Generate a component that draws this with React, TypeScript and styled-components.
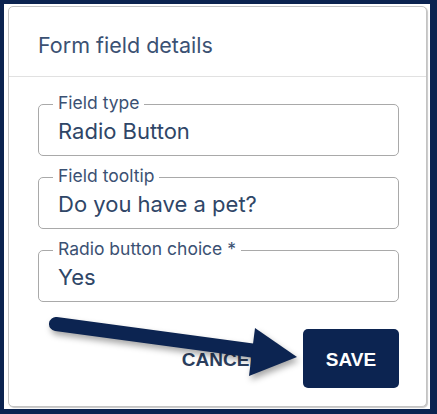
import React from 'react';
import styled, { createGlobalStyle } from 'styled-components';

const GlobalStyle = createGlobalStyle`
    html, body {
        margin: 0;
        padding: 0;
        background: #0b2350;
    }
    * {
        box-sizing: border-box;
    }
`;

const Frame = styled.div`
    position: relative;
    width: 437px;
    height: 414px;
    padding: 4px 7px 5px 4px;
    background: #0b2350;
`;

const Sheet = styled.div`
    height: 100%;
    background: #ffffff;
    padding: 2px 3px 2px 4px;
`;

const Card = styled.div`
    height: 100%;
    display: flex;
    flex-direction: column;
    border: 1px solid #c4c4c4;
    border-radius: 5px;
    box-shadow: 1px 1px 1px rgba(0, 0, 0, 0.22);
    background: #ffffff;
`;

const Header = styled.div`
    height: 70px;
    display: flex;
    align-items: center;
    padding: 6px 0 0 29px;
    border-bottom: 1px solid #e1e1e1;
    font-family: Inter, "Liberation Sans", sans-serif;
    font-size: 21.5px;
    color: #3b5173;
`;

const Body = styled.div`
    display: flex;
    flex-direction: column;
    gap: 21px;
    padding: 27px 27px 0 29px;
`;

const Field = styled.div`
    position: relative;
    height: 52px;
    display: flex;
    align-items: center;
    padding: 1px 19px 0;
    border: 1px solid #a9a9a9;
    border-radius: 5px;
`;

const FieldLabel = styled.span`
    position: absolute;
    top: -13px;
    left: 14px;
    padding: 0 5px;
    background: #ffffff;
    font-family: Inter, "Liberation Sans", sans-serif;
    font-size: 17.5px;
    line-height: 22px;
    color: #3b5173;
`;

const FieldValue = styled.span`
    font-family: Inter, "Liberation Sans", sans-serif;
    font-size: 22px;
    color: #2f4667;
`;

const Actions = styled.div`
    display: flex;
    justify-content: flex-end;
    align-items: center;
    gap: 24px;
    padding: 27px 27px 0 0;
`;

interface ActionProps {
    $primary?: boolean
}

const ActionButton = styled.button<ActionProps>`
    height: 59px;
    min-width: ${props => props.$primary ? '96px' : 'auto'};
    padding: ${props => props.$primary ? '2px 0 0' : '2px 18px 0'};
    border: none;
    border-radius: 5px;
    background: ${props => props.$primary ? '#0c2451' : 'transparent'};
    color: ${props => props.$primary ? '#ffffff' : '#2b3e5d'};
    font-family: "Liberation Sans", Arial, sans-serif;
    font-weight: 700;
    font-size: 19px;
    cursor: pointer;
`;

const Pointer = styled.svg`
    position: absolute;
    left: 0;
    top: 0;
    pointer-events: none;
    filter: drop-shadow(2px 4px 3px rgba(0, 0, 0, 0.35));
`;

const fields = [
    { label: 'Field type', value: 'Radio Button' },
    { label: 'Field tooltip', value: 'Do you have a pet?' },
    { label: 'Radio button choice *', value: 'Yes' },
];

function Arrow() {
    return (
        <Pointer width="437" height="414" viewBox="0 0 437 414">
            <line x1="56" y1="324" x2="256" y2="351" stroke="#0c2451" strokeWidth="14" strokeLinecap="round" />
            <polygon points="255,328 297,357 249,376" fill="#0c2451" />
        </Pointer>
    )
}

export default function App() {
    return (
        <Frame>
            <GlobalStyle />
            <Sheet>
                <Card>
                    <Header>Form field details</Header>
                    <Body>
                        {fields.map((field) => (
                            <Field key={field.label}>
                                <FieldLabel>{field.label}</FieldLabel>
                                <FieldValue>{field.value}</FieldValue>
                            </Field>
                        ))}
                    </Body>
                    <Actions>
                        <ActionButton>CANCEL</ActionButton>
                        <ActionButton $primary>SAVE</ActionButton>
                    </Actions>
                </Card>
            </Sheet>
            <Arrow />
        </Frame>
    )
}
